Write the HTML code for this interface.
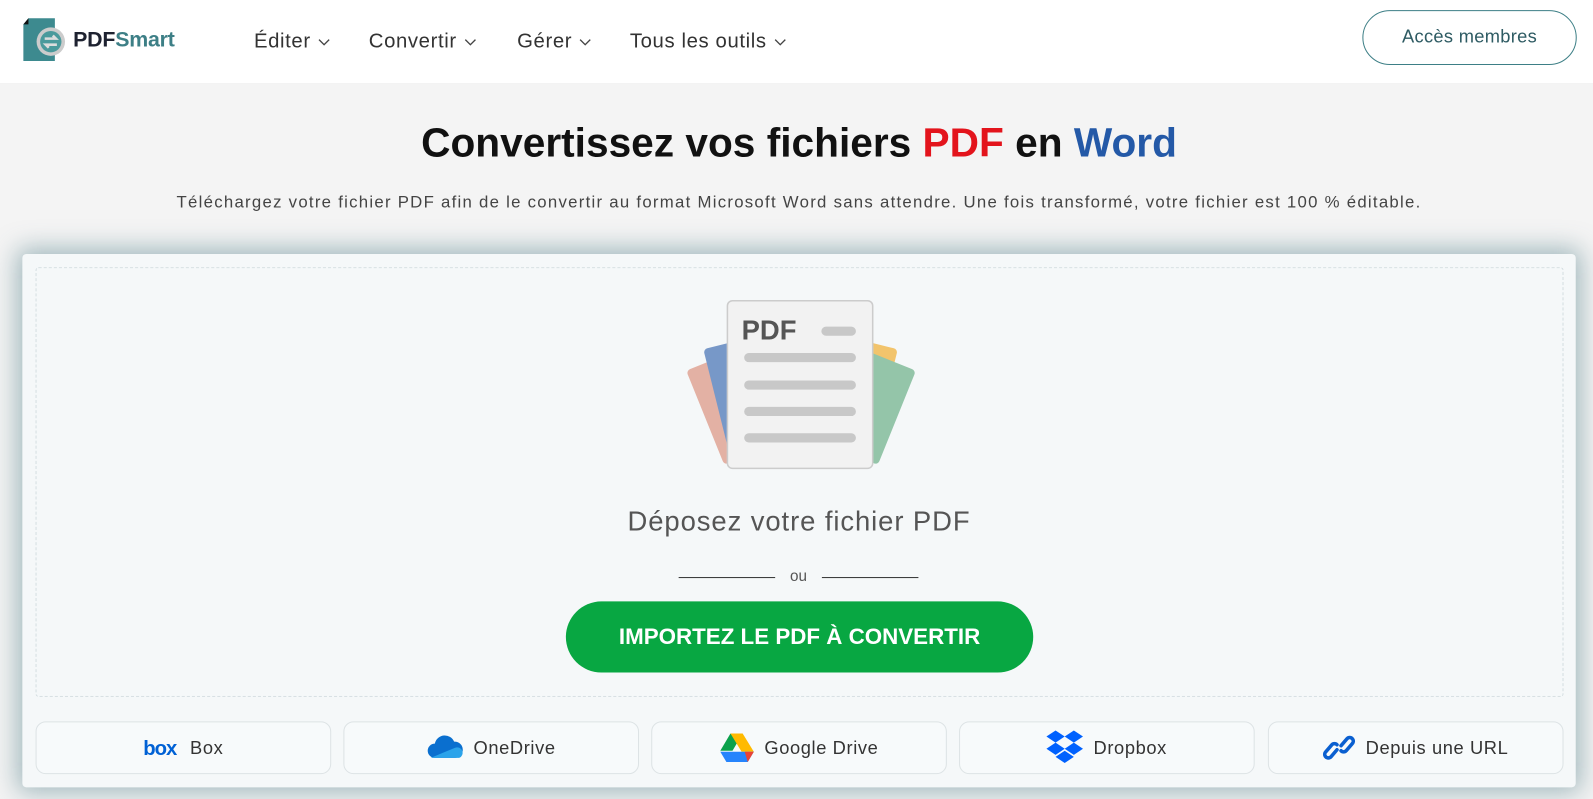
<!DOCTYPE html>
<html><head><meta charset="utf-8"><style>
*{box-sizing:border-box;margin:0;padding:0}
body{width:1593px;height:798px;overflow:hidden;background:#f4f4f4;font-family:"Liberation Sans",sans-serif;color:#333}
#w{position:absolute;left:0;top:0;width:1568px;height:786px;transform:scale(1.01594);transform-origin:0 0}
.hdr{position:absolute;left:0;top:0;width:1568px;height:83px;background:#fff;border-bottom:1px solid #eee}
.logo{position:absolute;left:22px;top:18px}
.brand{position:absolute;left:72px;top:28px;font-size:21px;font-weight:bold;color:#1e2230;letter-spacing:-0.2px}
.brand span{color:#3d7f86}
.nav{position:absolute;top:30px;font-size:20px;color:#333;letter-spacing:0.6px}
.nav svg{margin-left:7px;vertical-align:middle}
.btnm{position:absolute;left:1341px;top:10px;width:211px;height:54px;border:1.5px solid #3d7f86;border-radius:27px;text-align:center;line-height:51px;font-size:18px;color:#2e5b63;letter-spacing:0.3px}
h1{position:absolute;left:0;width:1573px;top:119px;text-align:center;font-size:40px;font-weight:bold;color:#111}
.sub{position:absolute;left:0;width:1573px;top:190px;text-align:center;font-size:16.5px;color:#444;letter-spacing:1.25px}
.card{position:absolute;left:22px;top:250px;width:1529px;height:525px;background:#f5f8f9;border-radius:4px;box-shadow:0 0 24px 5px rgba(80,125,135,.5)}
.drop{position:absolute;left:13px;top:13px;width:1504px;height:423px;border:1px dashed #d3dde0;border-radius:3px}
.dt{position:absolute;left:0;width:1529px;top:248px;text-align:center;font-size:27px;color:#555;letter-spacing:0.9px}
.ou{position:absolute;left:646px;top:309px;width:236px;text-align:center;font-size:15px;color:#555}
.ou:before,.ou:after{content:"";position:absolute;top:9px;width:95px;border-top:1.5px solid #333}
.ou:before{left:0}.ou:after{right:0}
.imp{position:absolute;left:535px;top:342px;width:460px;height:70px;background:#08a742;border-radius:35px;color:#fff;font-weight:bold;font-size:22px;text-align:center;line-height:70px}
.sb{position:absolute;top:460px;width:291px;height:52px;border:1px solid #dde3e5;border-radius:10px;background:#f7fafb;font-size:18px;color:#333;display:flex;align-items:center;justify-content:center;gap:10px;letter-spacing:0.6px}
svg{overflow:visible}
</style></head><body><div id="w">
<div class="hdr">
<svg class="logo" width="42" height="42" viewBox="0 0 42 42"><path d="M6 0h26v42H1V6z" fill="#3d8a8f"/><path d="M1 6L6 0v6z" fill="#111"/><circle cx="28" cy="23" r="14" fill="#ccc"/><circle cx="28" cy="23" r="10.5" fill="#4b9a9c"/><path d="M22 20h11l-3-3M34 26H23l3 3" stroke="#ddd" stroke-width="2.5" fill="none"/></svg>
<div class="brand">PDF<span>Smart</span></div>
<div class="nav" style="left:250px">Éditer<svg width="12" height="8"><path d="M1 1l5 5 5-5" stroke="#444" fill="none" stroke-width="1.3"/></svg></div>
<div class="nav" style="left:363px">Convertir<svg width="12" height="8"><path d="M1 1l5 5 5-5" stroke="#444" fill="none" stroke-width="1.3"/></svg></div>
<div class="nav" style="left:509px">Gérer<svg width="12" height="8"><path d="M1 1l5 5 5-5" stroke="#444" fill="none" stroke-width="1.3"/></svg></div>
<div class="nav" style="left:620px">Tous les outils<svg width="12" height="8"><path d="M1 1l5 5 5-5" stroke="#444" fill="none" stroke-width="1.3"/></svg></div>
<div class="btnm">Accès membres</div>
</div>
<h1>Convertissez vos fichiers <span style="color:#e3141c">PDF</span> en <span style="color:#2459a7">Word</span></h1>
<div class="sub">Téléchargez votre fichier PDF afin de le convertir au format Microsoft Word sans attendre. Une fois transformé, votre fichier est 100 % éditable.</div>
<div class="card">
<div class="drop"></div>
<svg style="position:absolute;left:640px;top:40px" width="250" height="180" viewBox="0 0 250 180">
<g opacity=".75">
<rect x="30" y="60" width="60" height="100" rx="4" fill="#dd9a88" transform="rotate(-22 60 110)"/>
<rect x="42" y="45" width="60" height="105" rx="4" fill="#4e78b8" transform="rotate(-14 72 97)"/>
<rect x="150" y="45" width="60" height="105" rx="4" fill="#f2b33d" transform="rotate(14 180 97)"/>
<rect x="163" y="60" width="60" height="100" rx="4" fill="#74b48f" transform="rotate(22 193 110)"/>
</g>
<rect x="54" y="6" width="143" height="165" rx="5" fill="#f2f2f2" stroke="#ccc" stroke-width="1.5"/>
<text x="68" y="44" font-family="Liberation Sans" font-weight="bold" font-size="27" fill="#555">PDF</text>
<g stroke="#c8c8c8" stroke-width="9" stroke-linecap="round"><path d="M151 36h25M75 62h101M75 89h101M75 115h101M75 141h101"/></g>
</svg>
<div class="dt">Déposez votre fichier PDF</div>
<div class="ou">ou</div>
<div class="imp">IMPORTEZ LE PDF À CONVERTIR</div>
<div class="sb" style="left:13px"><svg width="36" height="20" viewBox="0 0 36 20"><text x="0" y="17" font-family="Liberation Sans" font-weight="bold" font-size="20" fill="#0061d5" letter-spacing="-1">box</text></svg>Box</div>
<div class="sb" style="left:316px"><svg width="36" height="24" viewBox="0 0 36 24"><path d="M8 22a7 7 0 010-14 10 10 0 0119-2 8 8 0 011 16z" fill="#0a6fcf"/><path d="M4 22h28a5 5 0 00-4-10l-12 5z" fill="#2ba3ea"/></svg>OneDrive</div>
<div class="sb" style="left:619px"><svg width="34" height="30" viewBox="0 0 34 30"><path d="M11 1h12L13 18H1z" fill="#0ba14b"/><path d="M11 1h12l11 18h-12z" fill="#ffba00"/><path d="M1 19l6 10h21l6-10z" fill="#2684fc"/><path d="M28 29l6-10h-9z" fill="#ea4335"/></svg>Google Drive</div>
<div class="sb" style="left:922px"><svg width="36" height="36" viewBox="0 0 36 36"><g fill="#0061fe"><path d="M9 1l9 6-9 6-9-6zM27 1l9 6-9 6-9-6zM9 13l9 6-9 6-9-6zM27 13l9 6-9 6-9-6zM18 21l9 6-9 6-9-6z"/></g></svg>Dropbox</div>
<div class="sb" style="left:1226px"><svg width="32" height="32" viewBox="0 0 32 32" fill="none" stroke="#0a5fd0" stroke-width="3.5" stroke-linecap="round"><path d="M14 18l-6 7a3.5 3.5 0 01-5-5l6-7a3.5 3.5 0 015 0"/><path d="M18 14l6-7a3.5 3.5 0 015 5l-6 7a3.5 3.5 0 01-5 0"/></svg>Depuis une URL</div>
</div>
</div></body></html>
